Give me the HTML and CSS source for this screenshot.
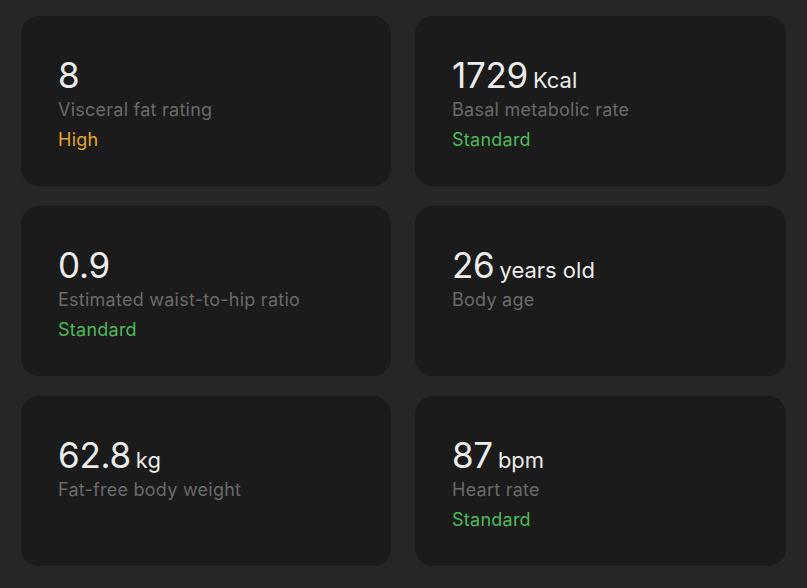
FILE: index.html
```html
<!DOCTYPE html>
<html>
<head>
<meta charset="utf-8">
<link rel="stylesheet" href="styles.css">
</head>
<body>
<div class="grid">
  <div class="card">
    <div class="value">8</div>
    <div class="label">Visceral fat rating</div>
    <div class="status high">High</div>
  </div>
  <div class="card">
    <div class="value">1729<span class="unit">Kcal</span></div>
    <div class="label">Basal metabolic rate</div>
    <div class="status ok">Standard</div>
  </div>
  <div class="card">
    <div class="value">0.9</div>
    <div class="label">Estimated waist-to-hip ratio</div>
    <div class="status ok">Standard</div>
  </div>
  <div class="card">
    <div class="value">26<span class="unit">years old</span></div>
    <div class="label">Body age</div>
  </div>
  <div class="card">
    <div class="value">62.8<span class="unit">kg</span></div>
    <div class="label">Fat-free body weight</div>
  </div>
  <div class="card">
    <div class="value">87<span class="unit">bpm</span></div>
    <div class="label">Heart rate</div>
    <div class="status ok">Standard</div>
  </div>
</div>
</body>
</html>
```
FILE: styles.css
```css
html, body {
  margin: 0;
  background: #262626;
}
body {
  font-family: Inter, "Noto Sans", sans-serif;
  width: 807px;
  height: 588px;
  overflow: hidden;
}
.grid {
  display: grid;
  grid-template-columns: 370px 371px;
  column-gap: 24px;
  row-gap: 20px;
  padding: 16px 21px;
}
.card {
  background: #1b1b1b;
  border-radius: 18px;
  height: 170px;
  box-sizing: border-box;
  padding: 39px 37px 0 37px;
}
.value {
  font-size: 35px;
  line-height: 40px;
  height: 40px;
  color: #ececec;
  font-weight: 400;
  letter-spacing: -0.3px;
}
.unit {
  font-size: 22px;
  line-height: 1;
  margin-left: 5px;
  letter-spacing: 0;
}
.label {
  font-size: 18px;
  line-height: 30px;
  color: #6a6a6a;
  letter-spacing: 0.25px;
}
.status {
  font-size: 18px;
  line-height: 30px;
  letter-spacing: 0.25px;
}
.high { color: #e3a72f; }
.ok { color: #4dba5a; }
```
